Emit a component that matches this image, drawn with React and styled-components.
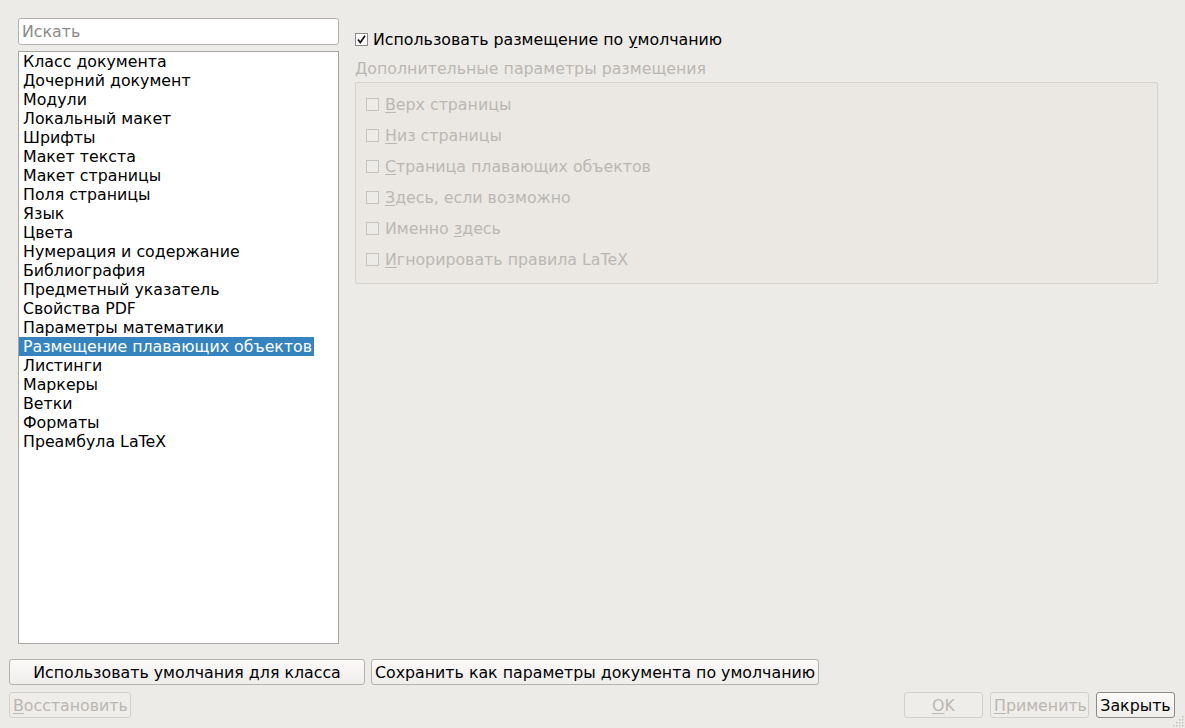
import React from 'react';
import styled, { createGlobalStyle } from 'styled-components';

const GlobalStyle = createGlobalStyle`
	html, body { margin: 0; padding: 0; background: #edebe7; }
	body { font-family: "DejaVu Sans", "Noto Sans", sans-serif; font-size: 15.8px; color: #000; }
	* { box-sizing: border-box; }
`;

const Window = styled.div`
	position: relative;
	width: 1185px;
	height: 728px;
	display: flex;
	flex-direction: column;
	background: #edebe7;
	overflow: hidden;
`;

const Main = styled.div`
	flex: 1;
	min-height: 0;
	display: flex;
	gap: 16px;
	padding: 18px 27px 0 18px;
`;

const Sidebar = styled.div`
	width: 321px;
	display: flex;
	flex-direction: column;
	gap: 6px;
`;

const Search = styled.input`
	height: 27px;
	border: 1px solid #b3b0ab;
	border-radius: 3px;
	background: #fff;
	padding: 0 3px;
	font: inherit;
	outline: none;
	&::placeholder { color: #8c8a87; }
`;

const List = styled.div`
	flex: 1;
	background: #fff;
	border: 1px solid #a9a6a1;
	display: flex;
	flex-direction: column;
	align-items: flex-start;
`;

const Item = styled.div`
	height: 19px;
	line-height: 19px;
	padding: 0 2px 0 4px;
	white-space: nowrap;
	background: ${p => (p.selected ? '#3584c0' : 'transparent')};
	color: ${p => (p.selected ? '#fff' : '#000')};
`;

const Content = styled.div`
	flex: 1;
	display: flex;
	flex-direction: column;
	padding-top: 12px;
`;

const CheckRow = styled.label`
	display: flex;
	align-items: center;
	gap: ${p => (p.inGroup ? '6px' : '5px')};
	height: ${p => (p.inGroup ? '31px' : '19px')};
	color: ${p => (p.disabled ? '#bab7b2' : '#000')};
	white-space: nowrap;
`;

const Box = styled.span`
	width: 13px;
	height: 13px;
	flex: none;
	border: 1px solid ${p => (p.disabled ? '#c6c3be' : '#8d8a86')};
	background: ${p => (p.disabled ? '#edebe7' : '#fff')};
	display: flex;
	align-items: center;
	justify-content: center;
`;

const Mnemonic = styled.span`
	text-decoration: underline;
	text-underline-offset: 2px;
`;

const GroupTitle = styled.div`
	margin-top: 10px;
	height: 19px;
	line-height: 19px;
	color: #bab7b2;
`;

const Group = styled.div`
	margin-top: 4px;
	height: 202px;
	border: 1px solid #d6d3ce;
	border-radius: 2px;
	background: #ebe8e4;
	padding: 6px 10px 0;
	display: flex;
	flex-direction: column;
`;

const Footer = styled.div`
	display: flex;
	flex-direction: column;
	gap: 7px;
	padding: 15px 10px 10px 9px;
`;

const ButtonRow = styled.div`
	display: flex;
	gap: ${p => p.gap || '6px'};
	align-items: center;
`;

const Spacer = styled.div`
	flex: 1;
`;

const Button = styled.button`
	height: 26px;
	width: ${p => p.w || 'auto'};
	padding: 0 3px;
	font: inherit;
	border-radius: 3px;
	border: 1px solid ${p => (p.disabled ? '#d3d0cb' : p.focus ? '#8e8b87' : '#b6b3ae')};
	color: ${p => (p.disabled ? '#bab7b2' : '#000')};
	background: ${p => (p.disabled ? '#efede9' : 'linear-gradient(#fbfaf9, #f0eeeb)')};
	white-space: nowrap;
`;

const Grip = styled.svg`
	position: absolute;
	right: 1px;
	bottom: 1px;
`;

const Check = () => (
	<svg width="11" height="11" viewBox="0 0 11 11">
		<path d="M2 5.5 L4.3 8.5 L9 1.8" fill="none" stroke="#111" strokeWidth="1.7" />
	</svg>
);

const items = [
	'Класс документа',
	'Дочерний документ',
	'Модули',
	'Локальный макет',
	'Шрифты',
	'Макет текста',
	'Макет страницы',
	'Поля страницы',
	'Язык',
	'Цвета',
	'Нумерация и содержание',
	'Библиография',
	'Предметный указатель',
	'Свойства PDF',
	'Параметры математики',
	'Размещение плавающих объектов',
	'Листинги',
	'Маркеры',
	'Ветки',
	'Форматы',
	'Преамбула LaTeX',
];

const options = [
	[<Mnemonic key="m">В</Mnemonic>, 'ерх страницы'],
	[<Mnemonic key="m">Н</Mnemonic>, 'из страницы'],
	[<Mnemonic key="m">С</Mnemonic>, 'траница плавающих объектов'],
	[<Mnemonic key="m">З</Mnemonic>, 'десь, если возможно'],
	['Именно ', <Mnemonic key="m">з</Mnemonic>, 'десь'],
	[<Mnemonic key="m">И</Mnemonic>, 'гнорировать правила LaTeX'],
];

const App = () => (
	<Window>
		<GlobalStyle />
		<Main>
			<Sidebar>
				<Search placeholder="Искать" />
				<List>
					{items.map(it => (
						<Item key={it} selected={it === 'Размещение плавающих объектов'}>
							{it}
						</Item>
					))}
				</List>
			</Sidebar>
			<Content>
				<CheckRow>
					<Box>
						<Check />
					</Box>
					<span>
						Использовать размещение по <Mnemonic>у</Mnemonic>молчанию
					</span>
				</CheckRow>
				<GroupTitle>Дополнительные параметры размещения</GroupTitle>
				<Group>
					{options.map((o, i) => (
						<CheckRow key={i} inGroup disabled>
							<Box disabled />
							<span>{o}</span>
						</CheckRow>
					))}
				</Group>
			</Content>
		</Main>
		<Footer>
			<ButtonRow>
				<Button w="356px">Использовать умолчания для класса</Button>
				<Button>Сохранить как параметры документа по умолчанию</Button>
			</ButtonRow>
			<ButtonRow gap="7px">
				<Button disabled w="122px">
					<Mnemonic>В</Mnemonic>осстановить
				</Button>
				<Spacer />
				<Button disabled w="79px">
					<Mnemonic>O</Mnemonic>K
				</Button>
				<Button disabled w="99px">
					<Mnemonic>П</Mnemonic>рименить
				</Button>
				<Button focus w="79px">
					Закрыть
				</Button>
			</ButtonRow>
		</Footer>
		<Grip width="12" height="12" viewBox="0 0 12 12">
			{[[9, 0], [9, 3], [9, 6], [9, 9], [6, 3], [6, 6], [6, 9], [3, 6], [3, 9], [0, 9]].map(([x, y]) => (
				<rect key={`${x}-${y}`} x={x + 1} y={y + 1} width="1.5" height="1.5" fill="#c4c1bc" />
			))}
		</Grip>
	</Window>
);

export default App;
